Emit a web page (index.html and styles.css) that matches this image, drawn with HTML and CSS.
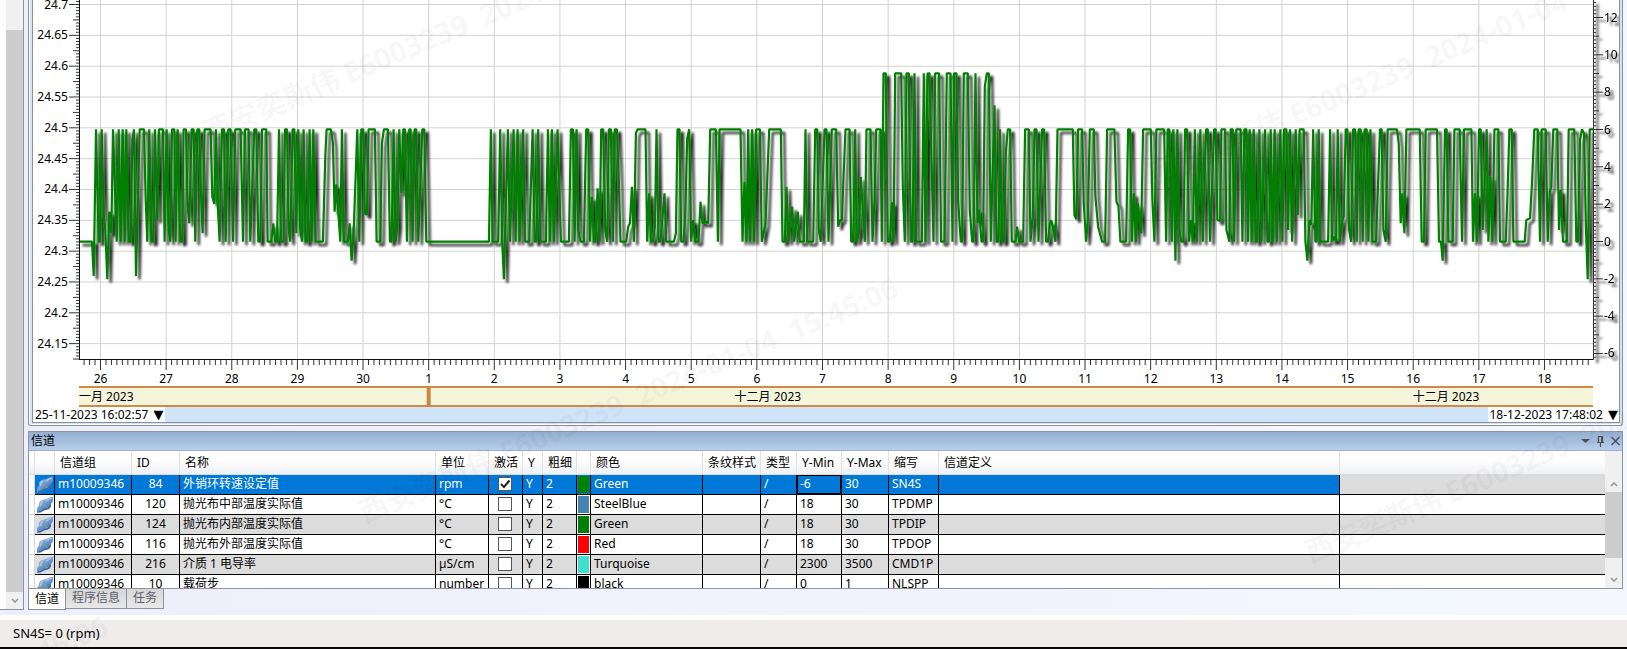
FILE: index.html
```html
<!DOCTYPE html>
<html lang="zh-CN">
<head>
<meta charset="utf-8">
<title>信道</title>
<link rel="stylesheet" href="styles.css">
</head>
<body>
<svg class="defs" aria-hidden="true">
  <defs>
    <linearGradient id="plug" x1="0.200" y1="0.100" x2="0.800" y2="0.900">
      <stop offset="0.2" stop-color="#8fb0dc"/><stop offset="0.5" stop-color="#6a95cd"/><stop offset="0.9" stop-color="#3a66a5"/>
    </linearGradient>
    <symbol id="channel" viewBox="0 0 18 18">
      <path d="M1 17V13Q1 11 3 9.500V7Q3.500 5 6 4L10 3Q13 1 17 1V4Q17 6 15 8V10.500Q14.500 12.500 12 13.500L8 14.500Q5 17 1 17Z" fill="url(#plug)"/>
      <path d="M6.500 6L11.500 12.500" stroke="#6fa58a" stroke-width="1.300"/>
      <path d="M4.500 10Q4.500 6.500 7 5.500M10.500 5Q13 2.500 15.500 2.200" stroke="#b4cbec" stroke-width="1.200" fill="none"/>
      <path d="M2 16Q6 15.500 8 13.500L12 12.500Q14 11.500 14.200 9" stroke="#355f9b" stroke-width="1" fill="none"/>
    </symbol>
    <symbol id="up" viewBox="0 0 8 6"><path d="M1 5L4 2L7 5" fill="none" stroke="#9a9a9a" stroke-width="1.600"/></symbol>
    <symbol id="down" viewBox="0 0 8 6"><path d="M1 1L4 4L7 1" fill="none" stroke="#9a9a9a" stroke-width="1.600"/></symbol>
  </defs>
</svg>
<div class="app">
  <div class="workspace">
    <aside class="side">
      <div class="side-scroll">
        <div class="side-thumb"></div>
        <button class="scroll-btn" aria-label="向下"><svg width="8" height="6"><use href="#down"/></svg></button>
      </div>
    </aside>
    <main class="content">
      <section class="chart-frame">
        <div class="chart-inner">
          <svg class="chart" id="chart" role="img" aria-label="SN4S"></svg>
          <div class="range">
            <button class="date">25-11-2023 16:02:57 <span>▼</span></button>
            <button class="date">18-12-2023 17:48:02 <span>▼</span></button>
          </div>
        </div>
      </section>
      <section class="panel">
        <header class="panel-title">
          <h2>信道</h2>
          <div class="panel-tools">
            <button aria-label="菜单"><svg width="9" height="12" viewBox="0 0 9 12"><path d="M0 4H9L4.500 8Z" fill="#4c4f58"/></svg></button>
            <button aria-label="固定"><svg width="9" height="12" viewBox="0 0 9 12"><path d="M2.500 1V7M6.500 1V7M2 1.500H7M1 7.500H8M4.500 8V12" stroke="#4c4f58" stroke-width="1.200" fill="none"/><path d="M5 2H6.500V7H5Z" fill="#4c4f58"/></svg></button>
            <button aria-label="关闭"><svg width="9" height="12" viewBox="0 0 9 12"><path d="M0.500 2L8.500 10M8.500 2L0.500 10" stroke="#4c4f58" stroke-width="1.500"/></svg></button>
          </div>
        </header>
        <div class="grid-wrap">
          <div class="grid-view">
            <table class="grid">
              <colgroup>
                <col class="c-row"><col class="c-icon"><col class="c-group"><col class="c-id"><col class="c-name"><col class="c-unit"><col class="c-act"><col class="c-y"><col class="c-w"><col class="c-sw"><col class="c-color"><col class="c-style"><col class="c-type"><col class="c-min"><col class="c-max"><col class="c-abbr"><col class="c-def"><col>
              </colgroup>
              <thead>
                <tr><th></th><th></th><th>信道组</th><th>ID</th><th>名称</th><th>单位</th><th>激活</th><th>Y</th><th>粗细</th><th></th><th>颜色</th><th>条纹样式</th><th>类型</th><th>Y-Min</th><th>Y-Max</th><th>缩写</th><th>信道定义</th><th></th></tr>
              </thead>
              <tbody id="rows"></tbody>
            </table>
          </div>
          <div class="grid-scroll">
            <button class="scroll-btn scroll-up" aria-label="向上"><svg width="8" height="6"><use href="#up"/></svg></button>
            <div class="grid-thumb"></div>
            <button class="scroll-btn scroll-down" aria-label="向下"><svg width="8" height="6"><use href="#down"/></svg></button>
          </div>
        </div>
      </section>
      <nav class="tabs">
        <button class="tab active">信道</button><button class="tab">程序信息</button><button class="tab">任务</button>
      </nav>
    </main>
  </div>
  <footer class="status">SN4S= 0 (rpm)</footer>
  <div class="marks" aria-hidden="true">
    <span class="mark m1">西安奕斯伟 E6003239  2024-01-04  15:45:06</span>
    <span class="mark m2">西安奕斯伟 E6003239  2024-01-04  15:45:06</span>
    <span class="mark m3">西安奕斯伟 E6003239  2024-01-04  15:45:06</span>
    <span class="mark m4">西安奕斯伟 E6003239  2024-01-04  15:45:06</span>
    <span class="mark m5">西安奕斯伟 E6003239  2024-01-04  15:45:06</span>
  </div>
</div>
<script src="app.js"></script>
</body>
</html>
```
FILE: styles.css
```css
* { box-sizing: border-box; }
body {
  margin: 0;
  font: 12px/16px "Noto Sans", "Noto Sans CJK SC", sans-serif;
  color: #000;
}
button {
  font: inherit;
  color: inherit;
  border: 0;
  padding: 0;
  margin: 0;
  background: none;
}
.defs { position: absolute; width: 0; height: 0; }
.app {
  position: relative;
  overflow: hidden;
  min-height: 100vh;
  display: flex;
  flex-direction: column;
}
.workspace {
  flex: 1;
  display: flex;
  gap: 4px;
  padding: 0 4px 5px 0;
  background: linear-gradient(90deg, #eeeefb, #f4f8fe);
  border-bottom: 5px solid #fff;
}
.side {
  flex: none;
  width: 24px;
  padding-left: 6px;
  background: #fff;
  border-right: 1px solid #8f90a2;
  border-bottom: 1px solid #8f90a2;
}
.side-scroll {
  height: 100%;
  padding-top: 30px;
  display: flex;
  flex-direction: column;
  background: #f0f0f0;
}
.side-thumb { flex: 1; background: #cdcdcd; }
.scroll-btn {
  height: 17px;
  display: flex;
  align-items: center;
  justify-content: center;
}
.content { flex: 1; min-width: 0; }
.chart-frame {
  padding: 0 2px 2px 3px;
  background: #d0e4f8;
  border: 1px solid #8c8f9c;
  border-top: 0;
  border-radius: 0 0 3px 3px;
  box-shadow: inset 1px -1px 0 #fff;
}
.chart-inner {
  border: 1px solid #8c8f9c;
  border-top: 0;
  background: #fff;
}
.chart { display: block; width: 100%; height: 407px; }
.chart text { font-size: 12px; }
.range {
  display: flex;
  justify-content: space-between;
  background: #d0e4f8;
}
.date {
  height: 15px;
  line-height: 15px;
  padding: 0 1px 0 2px;
  background: #fff;
}
.date span { margin-left: 2px; font: 13px/12px "DejaVu Sans", sans-serif; }
.panel {
  margin-top: 5px;
  border: 1px solid #8f959f;
}
.panel-title {
  height: 19px;
  padding: 0 2px;
  display: flex;
  align-items: center;
  justify-content: space-between;
  background: linear-gradient(#93afd0, #b8ceec);
  border-bottom: 1px solid #9cb0cc;
}
.panel-title h2 { margin: 0; font: inherit; }
.panel-tools { display: flex; gap: 6px; }
.panel-tools button, .panel-tools svg { display: block; }
.grid-wrap { height: 137px; display: flex; overflow: hidden; background: #fff; }
.grid-view { flex: 1; min-width: 0; overflow: hidden; }
.grid { width: 100%; table-layout: fixed; border-collapse: separate; border-spacing: 0; }
.c-row { width: 6px; }
.c-icon { width: 20px; }
.c-group { width: 77px; }
.c-id { width: 48px; }
.c-name { width: 256px; }
.c-unit { width: 53px; }
.c-act { width: 34px; }
.c-y { width: 20px; }
.c-w { width: 34px; }
.c-sw { width: 14px; }
.c-color { width: 112px; }
.c-style { width: 58px; }
.c-type { width: 36px; }
.c-min { width: 45px; }
.c-max { width: 47px; }
.c-abbr { width: 50px; }
.c-def { width: 401px; }
.grid th {
  height: 24px;
  padding: 0 0 0 5px;
  font-weight: 400;
  text-align: left;
  white-space: nowrap;
  background: linear-gradient(#fff 40%, #eff0f2);
  border-right: 1px solid #e0e1e4;
  border-bottom: 1px solid #dadbde;
}
.grid th:last-child { border-right: 0; }
.grid td {
  height: 20px;
  padding: 0 3px 2px;
  white-space: nowrap;
  border-right: 1px solid #000;
  border-bottom: 1px solid #000;
}
.grid td:last-child { border-right: 0; }
.grid td:first-child {
  padding: 0;
  background: #fff;
  border-right: 1px solid #d8d8d8;
  border-bottom-color: #d8d8d8;
}
.grid tr:nth-child(odd) td { background: #dcdcdc; }
.grid tr:nth-child(odd) td:first-child { background: #fff; }
.grid .selected td:not(:first-child):not(:last-child) { background: #0078d7; color: #fff; }
.grid .selected td.focus { box-shadow: inset 0 0 0 1px #000; }
.grid td.icon { padding: 0 0 0 1px; }
.icon svg { display: block; width: 18px; height: 18px; }
.grid td.id, .grid td.act { text-align: center; }
.grid td.id { padding-right: 9px; padding-left: 9px; }
.grid td.sw { padding: 0; }
.sw span { display: block; height: 19px; border: 1px solid #fff; }
.selected .sw span { border-color: #0078d7; }
.grid td.act { padding: 0 2px 1px 0; }
.act input {
  appearance: none;
  display: block;
  width: 14px;
  height: 14px;
  margin: 0 auto;
  background: #fff;
  border: 1px solid #555;
}
.act input:checked {
  background: #fff url("data:image/svg+xml,%3Csvg xmlns='http://www.w3.org/2000/svg' viewBox='0 0 12 12'%3E%3Cpath d='M2 6L5 9L10.500 2.500' fill='none' stroke='%23222' stroke-width='2'/%3E%3C/svg%3E");
}
.grid-scroll {
  width: 17px;
  display: flex;
  flex-direction: column;
  background: #f0f0f0;
}
.scroll-up { padding-top: 24px; height: 41px; }
.grid-thumb { height: 66px; background: #cdcdcd; }
.scroll-down { margin-top: auto; }
.tabs { display: flex; align-items: flex-start; height: 21px; }
.tab {
  height: 20px;
  padding: 0 6px 1px;
  color: #5d5d68;
  background: linear-gradient(#d6d6d6, #e8e8e8);
  border: 1px solid #8f9098;
  border-top: 0;
  border-left: 0;
}
.tab.active {
  height: 21px;
  color: #000;
  background: #fff;
  border-left: 1px solid #8f9098;
}
.status {
  height: 29px;
  padding: 5px 13px 0;
  font-size: 13px;
  background: #f0ecec;
  border-bottom: 2px solid #08080a;
}
.marks { position: absolute; inset: 0; overflow: hidden; pointer-events: none; }
.mark {
  position: absolute;
  font: bold 29px/40px "Noto Sans", "Noto Sans CJK SC", sans-serif;
  white-space: pre;
  color: rgba(0, 0, 0, 0.045);
  transform-origin: 14px 20px;
  transform: rotate(-23deg);
}
.m1 { left: 203px; top: 108px; }
.m2 { left: 359px; top: 488px; }
.m3 { left: 1149px; top: 150px; }
.m4 { left: 1305px; top: 528px; }
.m5 { left: -431px; top: 826px; }
```
FILE: app.js
```js
// Samples of channel SN4S: "time level"; H = 6 rpm, P = 9 rpm, L = 0 rpm.
// Other levels are in thirds of a pixel, like the time stamps.
const LEVELS = { H: 388, L: 725, P: 220 };
const PARTS = [
  [0, "235L 274L 279,828 286H 294L 298L 303H 309,640 314,690 320,838 326,635 332,700 337H 348L 354H 360L 366H 372L 377H 384L 390L 395,420 400H 406,828 417H 430H 435,600 440L 446H 452L 458L 463H 470,660 475H 487H 492L 498H 504,690 509L 514H 521H 525L 531H 539L 545L 549H 556H 561,620 566,670 573H 579H 584L 590H 596H 601,580 606,700 612H 630H 635,590 641,612 646H 652,630 657L 664H 670H 675L 683H 690H 697L 704H 720H 727L 733H 744H 749L 761H 767H 773L 779L 784H 797H 801L 812L 818,670 824L 829L 835H 841L 849L 853H 859H 864,690 869L 876H 881H 887,700 893H 898,680 904L 909H 915L 921L 927H 933L 938H 945L 967L 974,470 978H 991H 997,430 1002,635 1007,553 1013,640 1019L 1024H 1030L 1042L 1047,670 1053,782 1059,700 1070H 1076L 1082H 1088H 1093,640 1099,645 1104H 1123H 1128L 1139L 1144,430 1150H 1162H 1168L 1173L 1179H 1185L 1190,680 1196H"],
  [1200, "2,580 8H 13H 19L 26H 30H 36L 42H 47H 53L 65H 71H 77L 265L 271H 276L 293L 299H 305L 310,838 322H 328L 339H 345L 351H 357L 368H 374L 386L 396H 402L 408L 413H 420L 436L 442H 448L 454H 460L 471H 481L 505L 511H 517H 522L 528H 533,690 540L 550L 557H 563H 568L 574,590 580L 585L 591,565 597L 602H 608H 614,690 620L 625H 631H 637L 643H 649H 655,550 660L 677L 683,680 688,670 694,560 700L 706,400 711H 735H 740L 746,580 751L 757L 763,680 768H 774L 780L 792,580 797L 820L 826,700 831H 837H 842L 849L 854,650 860,415 866H 872L 878,660 884L 894L 900,605 906,670 915,665 923,670 929H 946H 952L 957H 1020H 1026L 1032,545 1038L 1043H 1049L 1055H 1061L 1067H 1078H 1084L 1095,670 1106H 1141H 1146L 1153L 1158,560 1164L 1175,620 1181L 1192,635 1198L"],
  [2400, "10L 15H 20L 38L 44H 50H 55,690 61L 72H 78H 84L 94H 107H 113,680 119,660 124,660 135H 147H 152L 158L 164H 169L 175,700 181,530 193L 198H 210H 216L 222,600 227H 240H 244L"],
  [2400, "249P 256P 262L 268L 274,607 279L 284P 302P 307,560 313L 318P 325P 331L 336L 342P 347L 364L 370P 375L 381P 387P 399L 404P 416P 422L 432L 439P 450P 456L 461P 468P 473,600 481L 485L 490P 502P 508,630 515L 519L 525P 531,670 536,628 543L 548L 553,260 559P 565P 571L 582,316 588L 594L 599H 605L 611L 616,460 622H 629H 634L 645L 650,680 656L 668L 674H 685H 690L 697,650 702H 708H 714L 725H 731H 737L 743L 748,670 753,662 765L 771H 817H 822,645 828,658 833H 845H 850,610 857L 862,660 868H 880H 885,590 893,680 905L 914L 920H 942H 948,605 954,618 960L 977L 983H 989H 994L 1000,580 1006L 1012,610 1022,700 1028H 1051H 1056,600 1062L 1068H 1091H 1097L 1102H 1107H 1114L 1119H 1125,782 1131H 1137,690 1143L 1149L 1154H 1160H 1166L 1171,660 1177L 1183H 1189L 1200H 1207L 1217H 1222H 1229L"],
  [3621, "20H 25H 30,660 38,663 42H 53H 57,690 66L 70H 76H 80L 87H 100H 105L 111H 117H 122L 127H 133L 139H 145L 150L 156H 162L 173H 180L 185L 190H 196L 202H 208L 219H 225L 230H 237H 242,690 248H 254L 265H 271,645 277H 289H 294L 300,782 306,660 312,675 317H 324L 328L 334H 339L 362L 368H 374L 380,710 386L 391H 397L 405,660 409,650 415H 420H 425,690 431L 437H 443H 448L 454H 460H 466L 472H 478H 483L 489H 495L 506L 518H 523H 528,690 535L 541H 569H 574,430 580,670 585,580 591,700 597H 637H 643L 650L 655H 689H 695L 701L 706,782 713H 718H 723L 736L 741H 757H 764L 770H 792H 797L 803,580 809L 815H 820H 826,690 838H 843L 849,530 855L 861H 873H 878L 895L 900,590 906H 913H 918L 952L 957,660 968,655 974,550 981H 991H 998L 1003H 1015H 1021L 1027,575 1032,560 1038H 1050H 1055,690 1060,570 1067L 1079L 1084H 1101H 1107L 1112L 1118,420 1124H 1130,400 1136,690 1141,838 1147H 1157H"]
];
const SAMPLES = PARTS.flatMap(([base, text]) => text.split(" ").map(s => {
  const m = s.match(/^(-?\d+)(?:,(\d+)|([HLP]))$/);
  return [base + Number(m[1]), m[3] ? LEVELS[m[3]] : Number(m[2])];
}));
const T0 = 235, T1 = 4778, BOTTOM = 360;
const DAYS = [26, 27, 28, 29, 30, 1, 2, 3, 4, 5, 6, 7, 8, 9, 10, 11, 12, 13, 14, 15, 16, 17, 18];

function draw() {
  const svg = document.getElementById("chart");
  const W = svg.clientWidth, left = 46, right = W - 26;
  const tx = t => left + (t - T0) / (T1 - T0) * (right - left);
  const day = i => tx(299.5 + i * 196.95);
  let grid = "", ticks = "", rticks = "", labels = "", rlabels = "";
  for (let k = -4; k <= 118; k++) {
    const y = 4.5 + k * 3.083;
    if (y < 0 || y > BOTTOM) continue;
    const major = k % 10 === 0, len = major ? 10 : k % 5 === 0 ? 6 : 3;
    ticks += `M${left - len} ${y}H${left}`;
    if (major) {
      grid += `M${left} ${y}H${right}`;
      labels += `<text x="${left - 11}" y="${y + 4}" text-anchor="end">${Number((24.7 - k * 0.005).toFixed(2))}</text>`;
    }
  }
  for (let k = -31; k <= 66; k++) {
    const y = 241.5 - k * 3.733;
    if (y < 0 || y > BOTTOM) continue;
    const major = k % 10 === 0, len = major ? 10 : k % 5 === 0 ? 6 : 3;
    rticks += `M${right} ${y}h${len}`;
    if (major) rlabels += `<text x="${right + 11}" y="${y + 4}">${k / 5}</text>`;
  }
  for (let k = -3; k <= 272; k++) {
    const x = day(k / 12);
    if (x < left || x > right) continue;
    ticks += `M${x} ${BOTTOM}v${k % 12 === 0 ? 10 : 5}`;
  }
  DAYS.forEach((d, i) => {
    grid += `M${day(i)} 0V${BOTTOM}`;
    labels += `<text x="${day(i)}" y="383" text-anchor="middle">${d}</text>`;
  });
  const line = SAMPLES.map(([t, v]) => `${tx(t).toFixed(1)},${(v / 3).toFixed(1)}`).join(" ");
  const split = day(5);
  svg.innerHTML = `
    <defs>
      <filter id="shade" filterUnits="userSpaceOnUse" x="0" y="0" width="${W}" height="407">
        <feDropShadow dx="3.500" dy="3.500" stdDeviation="1.200" flood-color="#000" flood-opacity="0.85"/>
      </filter>
      <clipPath id="plot"><rect x="${left}" y="0" width="${right - left}" height="${BOTTOM}"/></clipPath>
    </defs>
    <path d="${grid}" stroke="#d3d3d3" fill="none"/>
    <g clip-path="url(#plot)"><polyline points="${line}" fill="none" stroke="#008000" stroke-width="2.200" stroke-linejoin="bevel" filter="url(#shade)"/></g>
    <path d="${ticks}" stroke="#333" fill="none"/>
    <path d="M${left + 0.5} 0V${BOTTOM}M${left} ${BOTTOM - 0.5}H${right}" stroke="#111" fill="none"/>
    <g filter="url(#shade)"><path d="M${right + 0.5} 0V${BOTTOM}${rticks}" stroke="#333" fill="none"/>${rlabels}</g>
    ${labels}
    <rect x="${left}" y="386" width="${right - left}" height="21" fill="#f5f5dc"/>
    <path d="M${left} 387H${right}M${left} 406H${right}" stroke="#d08a48" stroke-width="2"/>
    <path d="M${split} 387V406" stroke="#cd853f" stroke-width="4"/>
    <text x="${left}" y="401">一月 2023</text>
    <text x="${tx(2302)}" y="401" text-anchor="middle">十二月 2023</text>
    <text x="${tx(4337)}" y="401" text-anchor="middle">十二月 2023</text>`;
}

const ROWS = [
  [84, "外销环转速设定值", "rpm", "#008000", "Green", "-6", "30", "SN4S"],
  [120, "抛光布中部温度实际值", "°C", "#4682b4", "SteelBlue", "18", "30", "TPDMP"],
  [124, "抛光布内部温度实际值", "°C", "#008000", "Green", "18", "30", "TPDIP"],
  [116, "抛光布外部温度实际值", "°C", "#ff0000", "Red", "18", "30", "TPDOP"],
  [216, "介质 1 电导率", "µS/cm", "#40e0d0", "Turquoise", "2300", "3500", "CMD1P"],
  [10, "载荷步", "number", "#000000", "black", "0", "1", "NLSPP"]
];
document.getElementById("rows").innerHTML = ROWS.map((r, i) => `
  <tr class="${i ? "" : "selected"}"><td></td><td class="icon"><svg><use href="#channel"/></svg></td>
  <td>m10009346</td><td class="id">${r[0]}</td><td>${r[1]}</td><td>${r[2]}</td>
  <td class="act"><input type="checkbox" aria-label="激活 ${r[7]}" ${i ? "" : "checked"}></td>
  <td>Y</td><td>2</td><td class="sw"><span style="background:${r[3]}"></span></td><td>${r[4]}</td>
  <td></td><td>/</td><td class="${i ? "" : "focus"}">${r[5]}</td><td>${r[6]}</td><td>${r[7]}</td><td></td><td></td></tr>`).join("");
draw();
addEventListener("resize", draw);
```
